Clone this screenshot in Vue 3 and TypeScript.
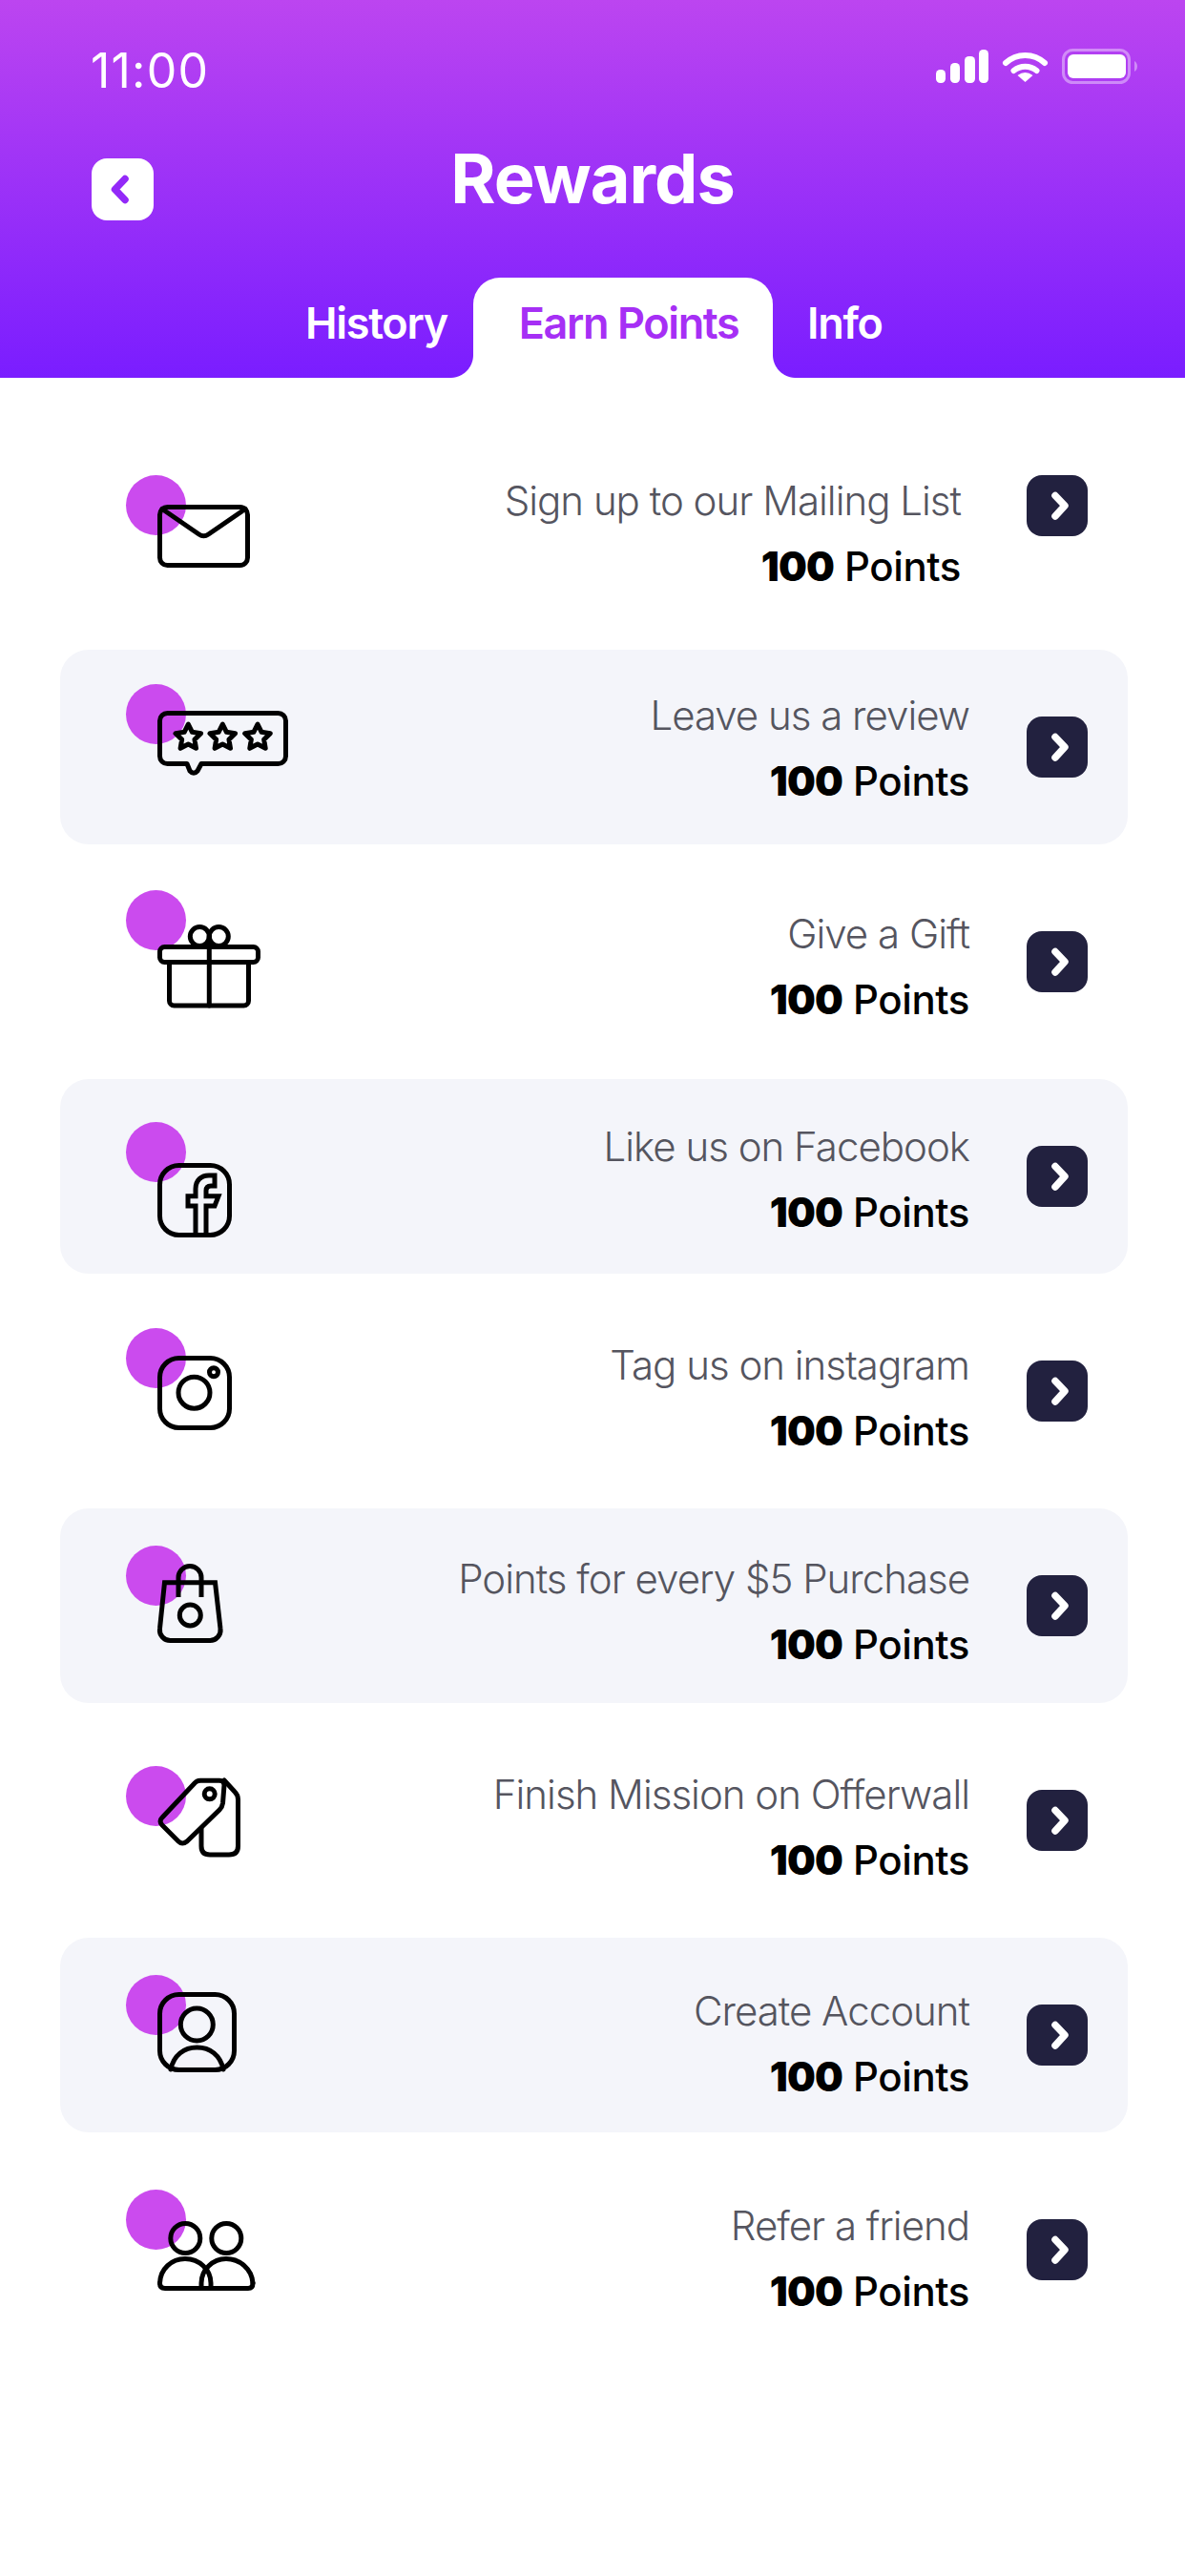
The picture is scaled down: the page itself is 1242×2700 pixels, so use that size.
<script setup lang="ts">
interface Reward {
  title: string
  icon: string
  circleTop: number
  iconGap: number
  textShift: number
}

const rewards: Reward[] = [
  { title: 'Sign up to our Mailing List', icon: 'mail', circleTop: 59, iconGap: 31, textShift: -1 },
  { title: 'Leave us a review', icon: 'review', circleTop: 36, iconGap: 28, textShift: 1 },
  { title: 'Give a Gift', icon: 'gift', circleTop: 48, iconGap: 36, textShift: 5 },
  { title: 'Like us on Facebook', icon: 'facebook', circleTop: 45, iconGap: 43, textShift: 3 },
  { title: 'Tag us on instagram', icon: 'instagram', circleTop: 57, iconGap: 29, textShift: 7 },
  { title: 'Points for every $5 Purchase', icon: 'bag', circleTop: 39, iconGap: 19, textShift: 6 },
  { title: 'Finish Mission on Offerwall', icon: 'tags', circleTop: 66, iconGap: 12, textShift: 7 },
  { title: 'Create Account', icon: 'account', circleTop: 39, iconGap: 18, textShift: 9 },
  { title: 'Refer a friend', icon: 'friends', circleTop: 60, iconGap: 33, textShift: 9 },
]

function star(cx: number, cy: number, R = 14, r = 7): string {
  const pts: string[] = []
  for (let i = 0; i < 10; i++) {
    const rad = i % 2 === 0 ? R : r
    const a = (Math.PI / 5) * i - Math.PI / 2
    pts.push(`${(cx + rad * Math.cos(a)).toFixed(2)},${(cy + rad * Math.sin(a)).toFixed(2)}`)
  }
  return pts.join(' ')
}
const stars = [star(32.3, 28), star(68.3, 28), star(105, 28)]
</script>

<template>
  <div class="screen">
    <header class="header">
      <div class="status">
        <span class="time">11:00</span>
        <svg class="status-icons" width="212" height="37" viewBox="0 0 212 37">
          <g fill="#fff">
            <rect x="0" y="22" width="10" height="14" rx="4.5" />
            <rect x="15" y="15" width="10" height="21" rx="4.5" />
            <rect x="30" y="8" width="11" height="28" rx="4.5" />
            <rect x="45" y="1" width="10" height="35" rx="4.5" />
          </g>
          <g transform="translate(70 1)">
            <path d="M3 14A30 30 0 0 1 44 14" fill="none" stroke="#fff" stroke-width="6" stroke-linecap="round" />
            <path d="M11.5 22A19 19 0 0 1 35.5 22" fill="none" stroke="#fff" stroke-width="6" stroke-linecap="round" />
            <path d="M23.5 34L15.5 27Q23.5 21 31.5 27Z" fill="#fff" />
          </g>
          <rect x="133.5" y="1.5" width="69" height="34" rx="10" fill="none" stroke="#fff" stroke-opacity="0.4" stroke-width="3" />
          <rect x="138" y="6" width="61" height="25" rx="6" fill="#fff" />
          <path d="M208 13Q211 15 211 18.5T208 24Z" fill="#fff" fill-opacity="0.4" />
        </svg>
      </div>

      <div class="title-row">
        <button class="back" type="button" aria-label="Back">
          <svg width="65" height="65" viewBox="0 0 65 65">
            <path d="M35 21.5L24.5 32.5L35 43.5" fill="none" stroke="#9329f8" stroke-width="7.5" stroke-linecap="round" stroke-linejoin="round" />
          </svg>
        </button>
        <h1 class="title">Rewards</h1>
      </div>

      <nav class="tabs">
        <span class="tab">History</span>
        <span class="tab active">Earn Points</span>
        <span class="tab">Info</span>
      </nav>
    </header>

    <main class="list">
      <section v-for="r in rewards" :key="r.title" class="row">
        <div class="icon-wrap" :style="{ marginTop: r.circleTop + 'px', paddingTop: r.iconGap + 'px' }">
          <span class="dot"></span>

          <svg v-if="r.icon === 'mail'" class="icon" width="97" height="66" viewBox="0 0 97 66">
            <rect x="2.5" y="2.5" width="92" height="61" rx="8" />
            <path d="M5 4.5L43.5 31Q48.500 34.500 53.500 31L92 4.500" />
          </svg>

          <svg v-else-if="r.icon === 'review'" class="icon" width="137" height="68" viewBox="0 0 137 68">
            <path d="M10.500 2.500H126.500A8 8 0 0 1 134.500 10.500V47.500A8 8 0 0 1 126.500 55.500H46L42 63Q38 67.500 34 63L31 55.500H10.500A8 8 0 0 1 2.500 47.500V10.500A8 8 0 0 1 10.500 2.500Z" />
            <polygon v-for="(s, i) in stars" :key="i" :points="s" />
          </svg>

          <svg v-else-if="r.icon === 'gift'" class="icon" width="108" height="88" viewBox="0 0 108 88">
            <rect x="2.500" y="23.500" width="103" height="16" rx="5" />
            <path d="M12.500 41V80A5 5 0 0 0 17.500 85H90.500A5 5 0 0 0 95.500 80V41" />
            <path d="M54.300 12.500V85" />
            <circle cx="44.300" cy="12.500" r="10" />
            <circle cx="64.300" cy="12.500" r="10" />
          </svg>

          <svg v-else-if="r.icon === 'facebook'" class="icon" width="78" height="78" viewBox="0 0 78 78">
            <rect x="2.500" y="2.500" width="73" height="73" rx="20" />
            <path class="sharp" d="M40 75V45H32V34.700H40V27C40 18 46 13 54 13H60V24H56C53 24 51 25.500 51 29V34.700H64L60 45H51V75" />
          </svg>

          <svg v-else-if="r.icon === 'instagram'" class="icon" width="78" height="78" viewBox="0 0 78 78">
            <rect x="2.500" y="2.500" width="73" height="73" rx="20" />
            <circle cx="38.500" cy="38.700" r="16.500" />
            <circle cx="59" cy="17.300" r="4.500" />
          </svg>

          <svg v-else-if="r.icon === 'bag'" class="icon" width="69" height="83" viewBox="0 0 69 83">
            <path class="sharp" d="M7.500 19.700H60.500L66 68A11 11 0 0 1 55 80.500H13.500A11 11 0 0 1 2.500 68Z" />
            <path class="sharp" d="M22 35V14.500A12 12 0 0 1 46 14.500V35" />
            <circle cx="34.300" cy="54" r="11" />
          </svg>

          <svg v-else-if="r.icon === 'tags'" class="icon" width="87" height="84" viewBox="0 0 87 84">
            <path d="M45 3.300H65Q70 3.300 70 8L68.500 27Q68 31 65 34L31 67Q26 71 22 67L5 50Q1 46 5 42L39 6Q41 3.500 45 3.300Z" />
            <circle cx="54.700" cy="17.300" r="5.500" />
            <path d="M70 3L81 15Q84.500 18.500 84.500 23V72Q84.500 81 75 81H55Q46 81 46 72V54" />
          </svg>

          <svg v-else-if="r.icon === 'account'" class="icon" width="83" height="84" viewBox="0 0 83 84">
            <rect x="2.500" y="2.500" width="78" height="79" rx="20" />
            <circle cx="41.300" cy="34" r="17" />
            <path d="M14 81C17 66 28 58 41.500 58C55 58 66 66 69 81" />
          </svg>

          <svg v-else class="icon" width="103" height="73" viewBox="0 0 103 73">
            <circle cx="29.300" cy="18" r="15.500" />
            <circle cx="72.300" cy="18" r="15.500" />
            <path d="M2.500 65C3 50 15 39.500 29 39.500C44 39.500 56 51 56 65V70" />
            <path d="M46 70V65C46 51 58 39.500 72 39.500C86 39.500 99 50 100 65" />
            <path d="M2.500 65Q2.500 70.500 8 70.500H95Q100 70.500 100 65" />
          </svg>
        </div>

        <div class="copy" :style="{ marginTop: r.textShift * 2 + 'px' }">
          <p class="name">{{ r.title }}</p>
          <p class="points"><b>100</b> Points</p>
        </div>

        <button class="go" type="button" aria-label="Open">
          <svg width="64" height="64" viewBox="0 0 64 64">
            <path d="M30 21.500L40 32L30 43" fill="none" stroke="#fff" stroke-width="7.500" stroke-linecap="round" stroke-linejoin="round" />
          </svg>
        </button>
      </section>
    </main>
  </div>
</template>

<style>
body { background: #fff; }
</style>

<style scoped>
.screen {
  width: 1242px;
  height: 2700px;
  background: #fff;
  font-family: Inter, "Liberation Sans", sans-serif;
  overflow: hidden;
}
.header {
  height: 396px;
  box-sizing: border-box;
  padding-top: 44px;
  background: linear-gradient(180deg, #bc45f0 0%, #7a1dff 100%);
  display: flex;
  flex-direction: column;
  color: #fff;
}
.status {
  height: 60px;
  display: flex;
  align-items: flex-start;
  justify-content: space-between;
  padding: 0 49px 0 95px;
}
.time {
  font-size: 50px;
  line-height: 60px;
  font-weight: 400;
  letter-spacing: 1.2px;
}
.status-icons { margin-top: 7px; }
.title-row {
  margin-top: 44px;
  height: 76px;
  display: grid;
  grid-template-columns: 1fr auto 1fr;
  align-items: start;
}
.back {
  width: 65px;
  height: 65px;
  margin: 18px 0 0 96px;
  padding: 0;
  border: 0;
  border-radius: 16px;
  background: #fff;
  display: block;
}
.back svg, .go svg { display: block; }
.title {
  margin: 0;
  font-size: 72px;
  line-height: 78px;
  font-weight: 700;
  letter-spacing: -1px;
}
.tabs {
  margin-top: auto;
  height: 105px;
  display: grid;
  grid-template-columns: 148px 314px auto;
  column-gap: 28px;
  justify-content: start;
  padding-left: 320px;
}
.tab {
  font-size: 45px;
  font-weight: 600;
  line-height: 96px;
  letter-spacing: -1.3px;
}
.tab.active {
  position: relative;
  box-sizing: border-box;
  padding-left: 12px;
  text-align: center;
  color: #a62ff5;
  background: #fff;
  border-radius: 28px 28px 0 0;
  letter-spacing: -1.4px;
}
.tab.active + .tab { margin-left: 8px; }
.tab.active::before,
.tab.active::after {
  content: "";
  position: absolute;
  bottom: 0;
  width: 24px;
  height: 24px;
}
.tab.active::before {
  left: -24px;
  background: radial-gradient(circle at 0 0, transparent 23.5px, #fff 24.5px);
}
.tab.active::after {
  right: -24px;
  background: radial-gradient(circle at 100% 0, transparent 23.5px, #fff 24.5px);
}
.list {
  padding: 43px 60px 0 63px;
}
.row {
  height: 246px;
  box-sizing: border-box;
  padding: 0 42px 0 69px;
  display: flex;
  align-items: center;
}
.row:nth-child(even) {
  height: 204px;
  background: #f4f5fa;
  border-radius: 30px;
}
.row:first-child { height: 242px; }
.icon-wrap {
  position: relative;
  align-self: flex-start;
  width: 172px;
  padding-left: 33px;
  box-sizing: border-box;
}
.dot {
  position: absolute;
  left: 0;
  top: 0;
  width: 63px;
  height: 63px;
  border-radius: 50%;
  background: #cb4bee;
}
.icon {
  position: relative;
  display: block;
  fill: none;
  stroke: #000;
  stroke-width: 5;
  stroke-linecap: round;
  stroke-linejoin: round;
  overflow: visible;
}
.icon .sharp {
  stroke-linecap: butt;
  stroke-linejoin: miter;
}
.copy {
  margin-left: auto;
  text-align: right;
}
.name {
  margin: 0;
  font-size: 42px;
  line-height: 69px;
  font-weight: 300;
  color: #55555f;
  letter-spacing: -1px;
}
.points {
  margin: 0;
  font-size: 42px;
  line-height: 69px;
  font-weight: 500;
  color: #000;
  letter-spacing: -0.4px;
}
.points b { font-weight: 900; letter-spacing: -0.8px; }
.go {
  flex: none;
  width: 64px;
  height: 64px;
  margin-left: 60px;
  padding: 0;
  border: 0;
  border-radius: 16px;
  background: #22213f;
}
.row:first-child .go {
  margin-left: 69px;
  margin-bottom: 60px;
}
</style>
